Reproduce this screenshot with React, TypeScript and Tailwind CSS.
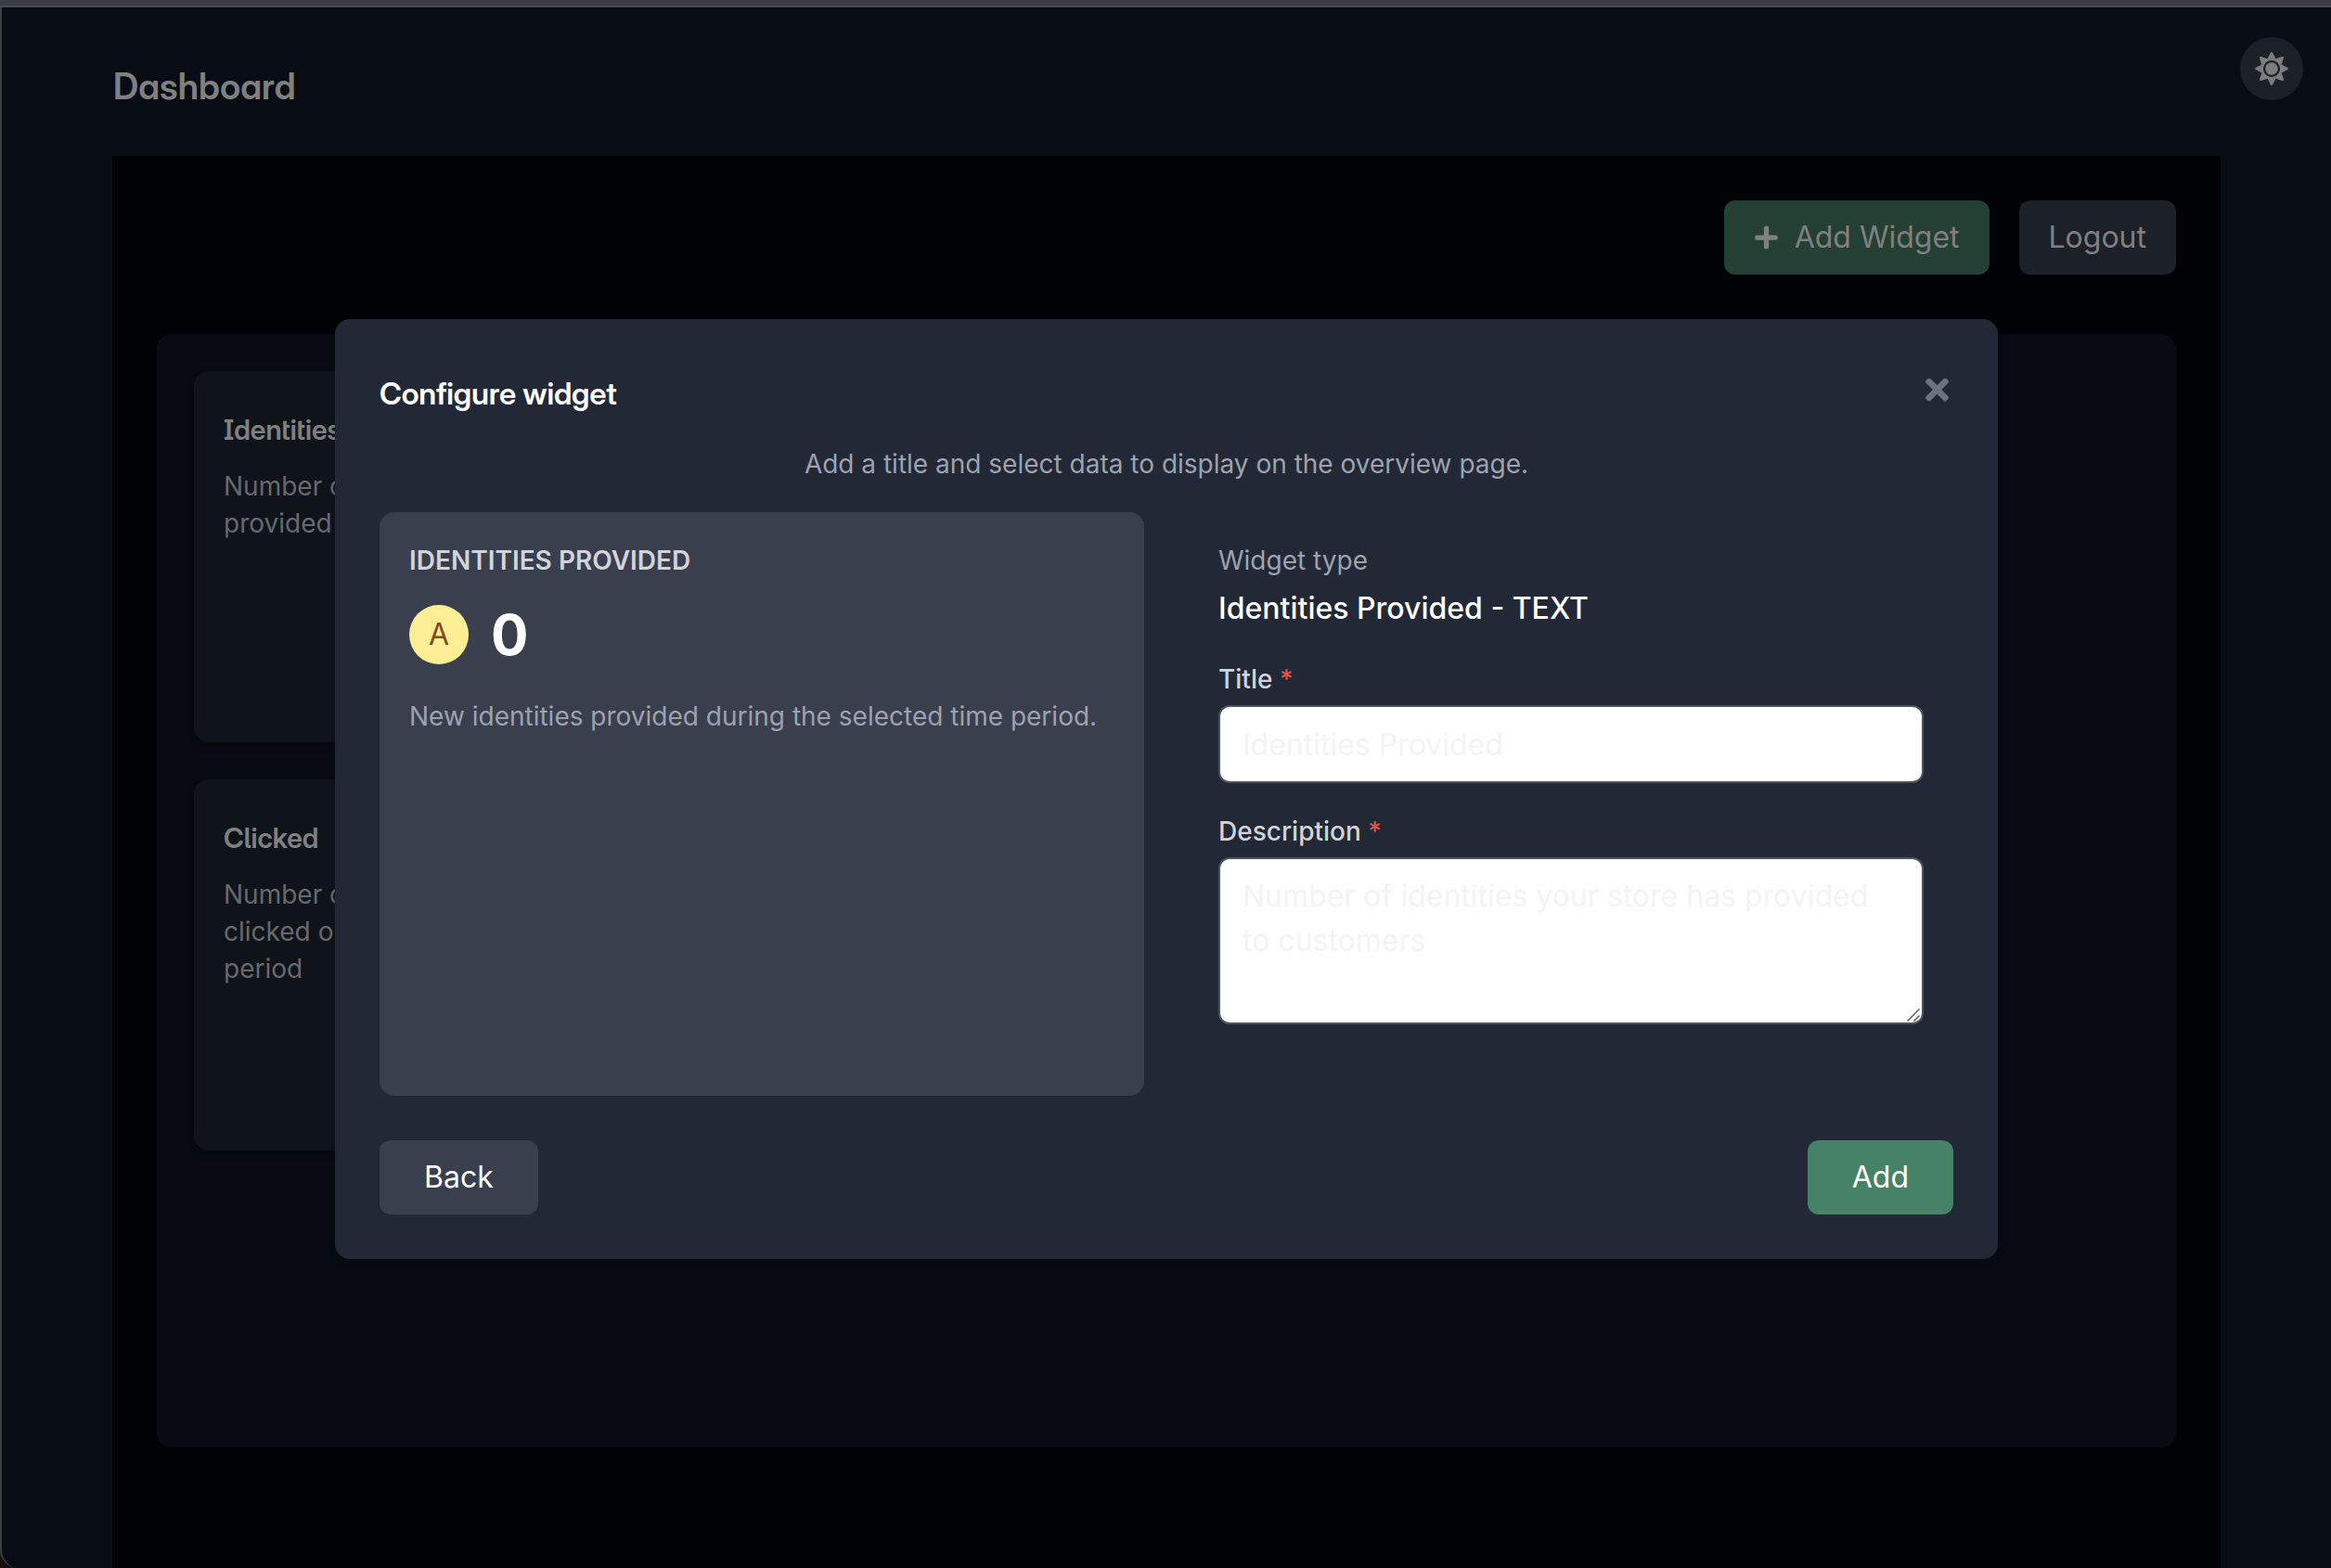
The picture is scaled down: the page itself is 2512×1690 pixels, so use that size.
import React from "react";
import { FaPlus, FaSun, FaTimes } from "react-icons/fa";

function WidgetCard({ title, text }: { title: string; text: string }) {
  return (
    <div className="h-[400px] w-[350px] rounded-2xl bg-[#0f141b] px-8 pt-[43px] shadow-[0_4px_6px_rgba(0,0,0,0.25)]">
      <div className="font-[Inter_Display,sans-serif]">
        <h3 className="text-[30px] leading-10 font-semibold text-[#808080] [font-feature-settings:'salt']">{title}</h3>
      </div>
      <p className="mt-[21px] text-[28px] leading-10 text-[#67696d]">{text}</p>
    </div>
  );
}

function Label({ children }: { children: string }) {
  return (
    <label className="block text-[28px] leading-10 font-medium text-[#d1d5db]">
      {children} <span className="text-[#e5534b]">*</span>
    </label>
  );
}

function ResizeHandle() {
  return (
    <svg className="pointer-events-none absolute right-[3px] bottom-[3px] h-4 w-4" viewBox="0 0 16 16" fill="none" stroke="#5f5f5f" strokeWidth="1.5">
      <path d="M1.5 15.5 14.5 2.5M8.5 15.5 14.5 9.5" />
    </svg>
  );
}

function ConfigureModal() {
  return (
    <div className="absolute top-[344px] left-[361px] flex h-[1013px] w-[1792px] flex-col rounded-2xl bg-[#222835] p-12 shadow-[0_4px_8px_rgba(0,0,0,0.2)]">
      <div className="flex h-16 items-center justify-between font-[Inter_Display,sans-serif]">
        <h2 className="text-[33px] leading-[48px] font-semibold tracking-[-0.2px] text-white [font-feature-settings:'cv11','cv08']">
          Configure widget
        </h2>
        <button className="mr-[5px] mb-2 text-[#6b7280]">
          <FaTimes className="h-9 w-[25px]" />
        </button>
      </div>
      <p className="mt-6 text-center text-[28px] leading-10 text-[#9ca3af]">
        Add a title and select data to display on the overview page.
      </p>
      <div className="mt-8 flex h-[629px] shrink-0">
        <div className="w-[824px] shrink-0 rounded-2xl bg-[#3a3f4e] px-8 pt-8">
          <h3 className="text-[28px] leading-10 font-semibold text-[#d1d5db]">IDENTITIES PROVIDED</h3>
          <div className="mt-6 flex h-[72px] items-center gap-6">
            <span className="flex h-16 w-16 items-center justify-center rounded-full bg-[#fcee95] text-[32px] text-[#7f4b1c]">
              A
            </span>
            <span className="text-[60px] leading-[72px] font-bold text-white">0</span>
          </div>
          <p className="mt-8 text-[28px] leading-10 text-[#9ca3af]">
            New identities provided during the selected time period.
          </p>
        </div>
        <div className="ml-20 w-[760px] pt-8">
          <p className="text-[28px] leading-10 text-[#9ca3af]">Widget type</p>
          <p className="mt-2 text-[32px] leading-[48px] font-medium text-white">Identities Provided - TEXT</p>
          <div className="mt-8">
            <Label>Title</Label>
            <input
              placeholder="Identities Provided"
              className="mt-2 block h-[84px] w-full rounded-xl border-2 border-[#4b5563] bg-white px-6 text-[32px] placeholder:text-[#f3f4f6]"
            />
          </div>
          <div className="mt-8">
            <Label>Description</Label>
            <div className="relative mt-2">
              <textarea
                placeholder="Number of identities your store has provided to customers"
                className="block h-[180px] w-full resize-none rounded-xl border-2 border-[#4b5563] bg-white px-6 py-4 text-[32px] leading-[48px] placeholder:text-[#f3f4f6]"
              />
              <ResizeHandle />
            </div>
          </div>
        </div>
      </div>
      <div className="mt-12 flex justify-between text-[32px] text-white">
        <button className="h-20 rounded-xl bg-[#3a3f4e] px-12">Back</button>
        <button className="h-20 rounded-xl bg-[#468267] px-12">Add</button>
      </div>
    </div>
  );
}

export default function App() {
  return (
    <div className="relative h-[1690px] w-[2512px] overflow-hidden bg-[#1a0f0c] font-[Inter,sans-serif]">
      <div className="flex h-full flex-col rounded-bl-[20px] border-l-2 border-[#3c3f44] bg-[#080c14]">
        <div className="-ml-0.5 h-2 shrink-0 border-b-2 border-[#4a484b] bg-[#3a3d45]" />
        <header className="flex h-40 shrink-0 justify-between pr-[30px] pl-[120px] font-[Inter_Display,sans-serif]">
          <h1 className="pt-[61px] text-[39px] leading-[48px] font-semibold text-[#808080] [font-feature-settings:'cv11','cv08']">
            Dashboard
          </h1>
          <button className="mt-8 flex h-[68px] w-[68px] items-center justify-center rounded-full bg-[#1c2029] text-[#7d7d7e]">
            <FaSun className="h-9 w-9" />
          </button>
        </header>
        <main className="ml-[119px] flex w-[2272px] flex-1 flex-col bg-[#010205] p-12">
          <div className="flex justify-end gap-8 text-[32px] text-[#808080]">
            <button className="flex h-20 items-center rounded-xl bg-[#243f33] pr-8 pl-[33px]">
              <FaPlus className="mr-[18px] h-7 w-[25px]" />
              Add Widget
            </button>
            <button className="h-20 rounded-xl bg-[#1c2028] px-8">Logout</button>
          </div>
          <section className="mt-16 flex h-[1200px] flex-col gap-10 rounded-2xl bg-[#080b13] p-10">
            <WidgetCard title="Identities Provided" text="Number of identities provided" />
            <WidgetCard title="Clicked" text="Number of identities clicked on in the time period" />
          </section>
        </main>
      </div>
      <ConfigureModal />
    </div>
  );
}
